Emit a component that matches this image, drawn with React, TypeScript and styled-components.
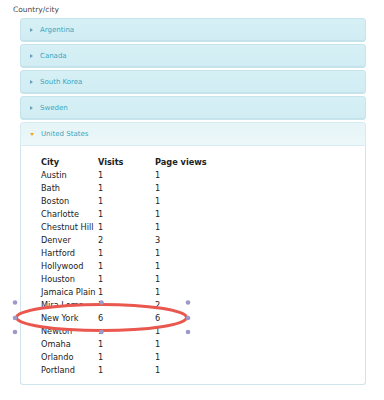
import React from 'react'
import styled, { createGlobalStyle } from 'styled-components'

const GlobalStyle = createGlobalStyle`
  html, body {
    margin: 0;
    background: #fff;
  }
  body {
    font-family: "DejaVu Sans", Verdana, sans-serif;
  }
`

type CityRow = { city: string; visits: number; views: number }

const countries = ['Argentina', 'Canada', 'South Korea', 'Sweden']

const cities: CityRow[] = [
  { city: 'Austin', visits: 1, views: 1 },
  { city: 'Bath', visits: 1, views: 1 },
  { city: 'Boston', visits: 1, views: 1 },
  { city: 'Charlotte', visits: 1, views: 1 },
  { city: 'Chestnut Hill', visits: 1, views: 1 },
  { city: 'Denver', visits: 2, views: 3 },
  { city: 'Hartford', visits: 1, views: 1 },
  { city: 'Hollywood', visits: 1, views: 1 },
  { city: 'Houston', visits: 1, views: 1 },
  { city: 'Jamaica Plain', visits: 1, views: 1 },
  { city: 'Mira Loma', visits: 1, views: 2 },
  { city: 'New York', visits: 6, views: 6 },
  { city: 'Newton', visits: 1, views: 1 },
  { city: 'Omaha', visits: 1, views: 1 },
  { city: 'Orlando', visits: 1, views: 1 },
  { city: 'Portland', visits: 1, views: 1 }
]

const Page = styled.div`
  position: relative;
  width: 384px;
  height: 400px;
  padding: 4px 0 0 13px;
  box-sizing: border-box;
`

const Label = styled.div`
  font-size: 7.5px;
  line-height: 11px;
  color: #4a4a4a;
  height: 14px;
`

const Accordion = styled.div`
  margin-left: 7px;
  width: 346px;
  display: flex;
  flex-direction: column;
  gap: 2px;
`

const Header = styled.div<{ open?: boolean }>`
  height: 24px;
  box-sizing: border-box;
  display: flex;
  align-items: center;
  padding-left: 9px;
  gap: 7px;
  font-size: 7px;
  color: #3aa6c1;
  border: 1px solid ${({ open }) => (open ? '#d6ecf1' : '#c6e4eb')};
  border-radius: ${({ open }) => (open ? '3px 3px 0 0' : '3px')};
  background: ${({ open }) =>
    open ? 'linear-gradient(#e6f5f8, #ecf7f9)' : 'linear-gradient(#d6f0f5, #d1edf3)'};
  box-shadow: ${({ open }) => (open ? 'none' : 'inset 0 -1px 0 #c3e2ea')};
`

const Arrow = styled.span<{ open?: boolean }>`
  width: 0;
  height: 0;
  ${({ open }) =>
    open
      ? `border-left: 2.5px solid transparent;
         border-right: 2.5px solid transparent;
         border-top: 3px solid #f0aa10;`
      : `border-top: 2.5px solid transparent;
         border-bottom: 2.5px solid transparent;
         border-left: 3px solid #6d9fbd;`}
`

const Section = styled.div`
  display: flex;
  flex-direction: column;
`

const Body = styled.div`
  border: 1px solid #cfe5eb;
  border-top: none;
  border-radius: 0 0 3px 3px;
  padding: 10px 0 8px 20px;
  height: 239px;
  box-sizing: border-box;
  background: #fff;
`

const Row = styled.div<{ highlighted?: boolean; head?: boolean }>`
  display: grid;
  grid-template-columns: 57px 57px auto;
  height: 13px;
  line-height: 13px;
  font-size: 8.2px;
  color: #222;
  font-weight: ${({ head }) => (head ? 'bold' : 'normal')};
  position: ${({ highlighted }) => (highlighted ? 'relative' : 'static')};
  z-index: ${({ highlighted }) => (highlighted ? 3 : 'auto')};
`

const Annotation = styled.svg`
  position: absolute;
  left: 10px;
  top: 296px;
  z-index: 2;
  overflow: visible;
`

const handles = [
  [5, 6.5],
  [91.5, 6.5],
  [178, 6.5],
  [5, 22],
  [178, 22],
  [5, 36],
  [91.5, 36],
  [178, 36]
]

export default function App() {
  return (
    <Page>
      <GlobalStyle />
      <Label>Country/city</Label>
      <Accordion>
        {countries.map(c => (
          <Header key={c}>
            <Arrow />
            {c}
          </Header>
        ))}
        <Section>
          <Header open>
            <Arrow open />
            United States
          </Header>
          <Body>
            <Row head>
              <span>City</span>
              <span>Visits</span>
              <span>Page views</span>
            </Row>
            {cities.map(r => (
              <Row key={r.city} highlighted={r.city === 'New York'}>
                <span>{r.city}</span>
                <span>{r.visits}</span>
                <span>{r.views}</span>
              </Row>
            ))}
          </Body>
        </Section>
      </Accordion>
      <Annotation width="184" height="42" viewBox="0 0 184 42">
        <ellipse
          cx="91.5"
          cy="21.5"
          rx="85"
          ry="13"
          fill="#fff"
          stroke="#e9574e"
          strokeWidth="3"
        />
        {handles.map(([x, y], i) => (
          <circle key={i} cx={x} cy={y} r="2.3" fill="#9c9ac8" />
        ))}
      </Annotation>
    </Page>
  )
}
